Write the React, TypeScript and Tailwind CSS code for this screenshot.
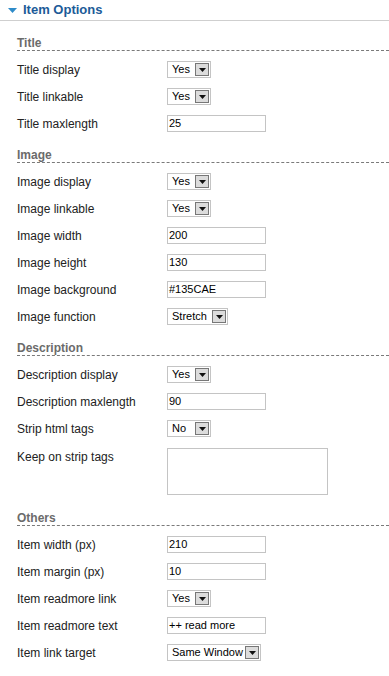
import type { ReactNode } from 'react'

type Field =
  | { label: string; kind: 'select'; value: string; width: string }
  | { label: string; kind: 'text'; value: string }
  | { label: string; kind: 'area' }

const sections: { title: string; fields: Field[] }[] = [
  {
    title: 'Title',
    fields: [
      { label: 'Title display', kind: 'select', value: 'Yes', width: 'w-[44px]' },
      { label: 'Title linkable', kind: 'select', value: 'Yes', width: 'w-[44px]' },
      { label: 'Title maxlength', kind: 'text', value: '25' },
    ],
  },
  {
    title: 'Image',
    fields: [
      { label: 'Image display', kind: 'select', value: 'Yes', width: 'w-[44px]' },
      { label: 'Image linkable', kind: 'select', value: 'Yes', width: 'w-[44px]' },
      { label: 'Image width', kind: 'text', value: '200' },
      { label: 'Image height', kind: 'text', value: '130' },
      { label: 'Image background', kind: 'text', value: '#135CAE' },
      { label: 'Image function', kind: 'select', value: 'Stretch', width: 'w-[61px]' },
    ],
  },
  {
    title: 'Description',
    fields: [
      { label: 'Description display', kind: 'select', value: 'Yes', width: 'w-[44px]' },
      { label: 'Description maxlength', kind: 'text', value: '90' },
      { label: 'Strip html tags', kind: 'select', value: 'No', width: 'w-[44px]' },
      { label: 'Keep on strip tags', kind: 'area' },
    ],
  },
  {
    title: 'Others',
    fields: [
      { label: 'Item width (px)', kind: 'text', value: '210' },
      { label: 'Item margin (px)', kind: 'text', value: '10' },
      { label: 'Item readmore link', kind: 'select', value: 'Yes', width: 'w-[44px]' },
      { label: 'Item readmore text', kind: 'text', value: '++ read more' },
      { label: 'Item link target', kind: 'select', value: 'Same Window', width: 'w-[94px]' },
    ],
  },
]

function FakeSelect({ value, width }: { value: string; width: string }) {
  return (
    <div className={`flex h-[17px] items-center justify-between border border-[#c4c4c4] bg-white pl-[4px] pr-px ${width}`}>
      <span className="whitespace-nowrap text-[11px] leading-none text-black">{value}</span>
      <span className="flex h-[13px] w-[14px] shrink-0 items-center justify-center border border-[#777] bg-[#dcdcdc]">
        <svg width="7" height="4" viewBox="0 0 7 4">
          <path d="M0 0h7L3.5 4z" fill="#111" />
        </svg>
      </span>
    </div>
  )
}

function Row({ label, children, tall }: { label: string; children: ReactNode; tall?: boolean }) {
  return (
    <div className={tall ? 'flex h-[58px] items-start pt-[6px]' : 'flex h-[27px] items-center'}>
      <div className={tall ? 'w-[150px] pt-[2px] text-[12px] leading-[14px] text-[#222]' : 'w-[150px] text-[12px] text-[#222]'}>
        {label}
      </div>
      {children}
    </div>
  )
}

export default function App() {
  return (
    <div className="h-[676px] w-[389px] overflow-hidden bg-white font-['Liberation_Sans',Arial,sans-serif]">
      <div className="flex h-[21px] items-center border-b border-[#cfcfcf] pl-[8px]">
        <svg width="9" height="5" viewBox="0 0 9 5" className="mr-[6px]">
          <path d="M0 0h9L4.5 5z" fill="#2e8bc9" />
        </svg>
        <span className="text-[13px] font-bold text-[#1c5b98]">Item Options</span>
      </div>

      <div className="pl-[17px]">
        {sections.map((s, i) => (
          <div key={s.title} className={i === 0 ? 'mt-[15px]' : 'mt-[11px]'}>
            <div className="border-b border-dashed border-[#7a7a7a] text-[12px] font-bold leading-[14px] text-[#6b6b6b]">
              {s.title}
            </div>
            <div className="mt-[5px]">
              {s.fields.map((f) => (
                <Row key={f.label} label={f.label} tall={f.kind === 'area'}>
                  {f.kind === 'select' && <FakeSelect value={f.value} width={f.width} />}
                  {f.kind === 'text' && (
                    <div className="flex h-[17px] w-[99px] items-center border border-[#c4c4c4] bg-white pl-px text-[11px] leading-none text-black">
                      {f.value}
                    </div>
                  )}
                  {f.kind === 'area' && <div className="h-[47px] w-[161px] border border-[#c4c4c4] bg-white" />}
                </Row>
              ))}
            </div>
          </div>
        ))}
      </div>
    </div>
  )
}
